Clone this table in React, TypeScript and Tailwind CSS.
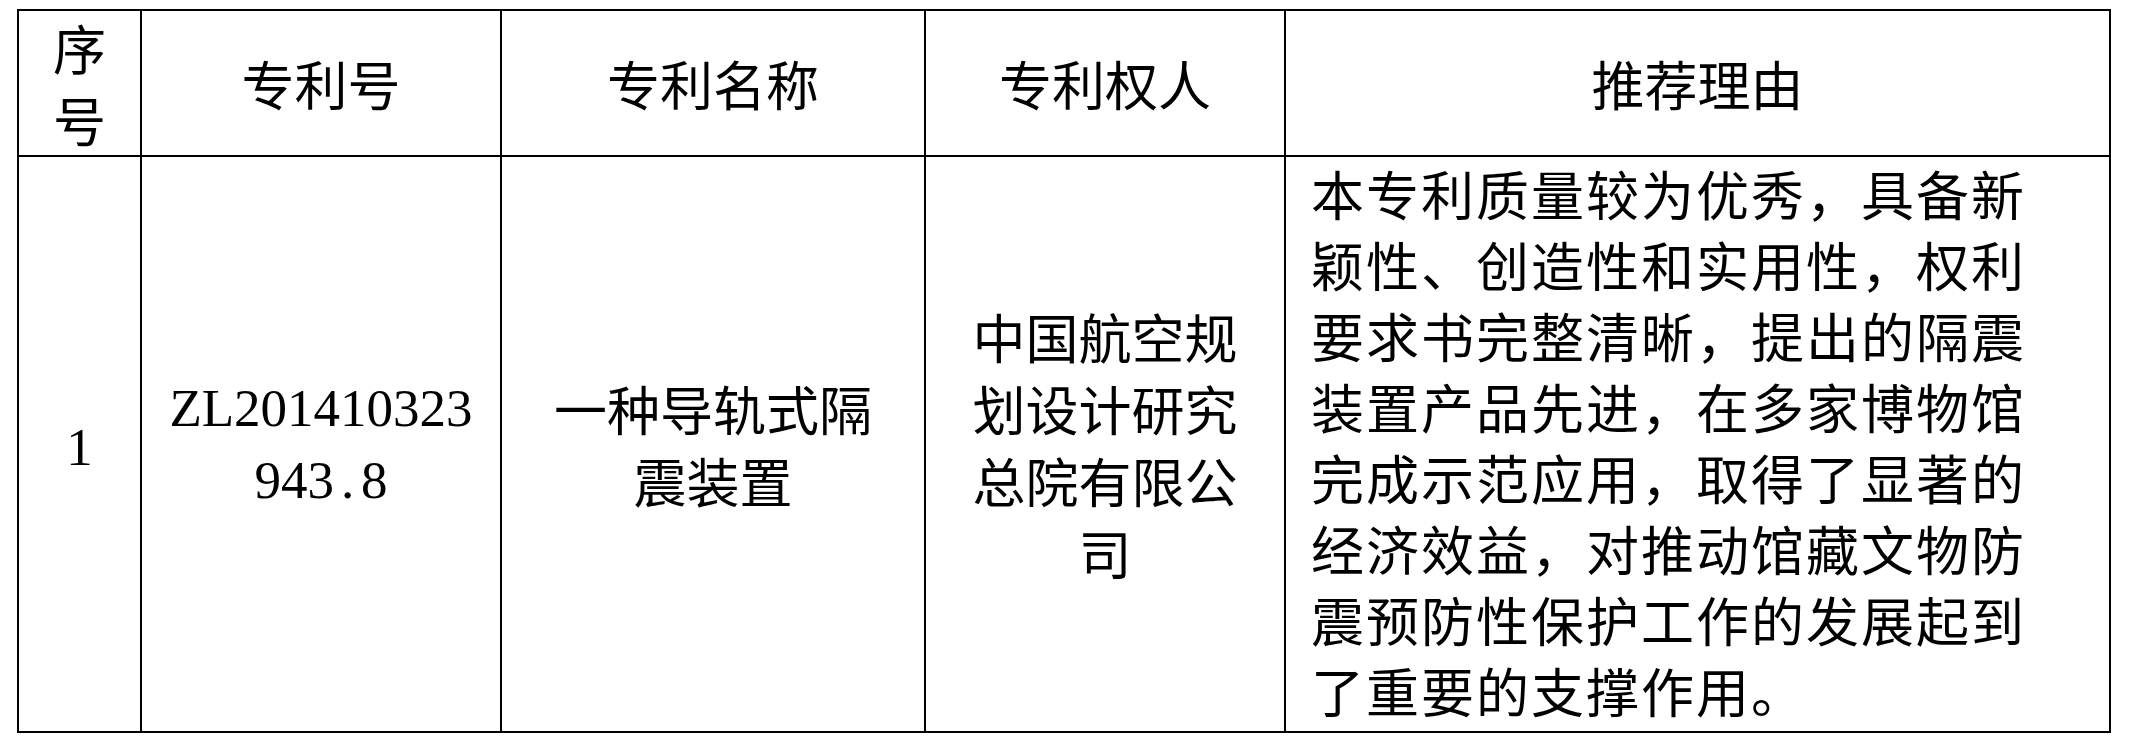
const reason = [
  "本专利质量较为优秀，具备新",
  "颖性、创造性和实用性，权利",
  "要求书完整清晰，提出的隔震",
  "装置产品先进，在多家博物馆",
  "完成示范应用，取得了显著的",
  "经济效益，对推动馆藏文物防",
  "震预防性保护工作的发展起到",
  "了重要的支撑作用。",
];

const holder = ["中国航空规", "划设计研究", "总院有限公", "司"];

const cell = "border-2 border-black align-middle text-center p-0";

export default function App() {
  return (
    <div className="min-h-screen bg-white pl-[17px] pt-[9px] text-black font-['Noto_Sans_CJK_SC',sans-serif] text-[53px] leading-[72px]">
      <table className="table-fixed border-collapse w-[2092px]">
        <colgroup>
          <col className="w-[123px]" />
          <col className="w-[360px]" />
          <col className="w-[424px]" />
          <col className="w-[360px]" />
          <col className="w-[825px]" />
        </colgroup>
        <thead>
          <tr className="h-[146px]">
            <th className={`${cell} font-normal`}>
              <div>序</div>
              <div>号</div>
            </th>
            <th className={`${cell} font-normal`}>专利号</th>
            <th className={`${cell} font-normal`}>专利名称</th>
            <th className={`${cell} font-normal`}>专利权人</th>
            <th className={`${cell} font-normal`}>推荐理由</th>
          </tr>
        </thead>
        <tbody>
          <tr className="h-[576px]">
            <td className={cell}>
              <span className="font-['Liberation_Serif',serif]">1</span>
            </td>
            <td className={`${cell} font-['Liberation_Serif',serif]`}>
              <div>ZL201410323</div>
              <div>
                943<span className="inline-block w-[27px]">.</span>8
              </div>
            </td>
            <td className={cell}>
              <div>一种导轨式隔</div>
              <div>震装置</div>
            </td>
            <td className={cell}>
              {holder.map(l => (
                <div key={l}>{l}</div>
              ))}
            </td>
            <td className={`${cell} text-left align-top pl-[25px] pt-[1px]`}>
              {reason.map(l => (
                <div key={l} className="leading-[71px] tracking-[2px] whitespace-nowrap">
                  {l}
                </div>
              ))}
            </td>
          </tr>
        </tbody>
      </table>
    </div>
  );
}
